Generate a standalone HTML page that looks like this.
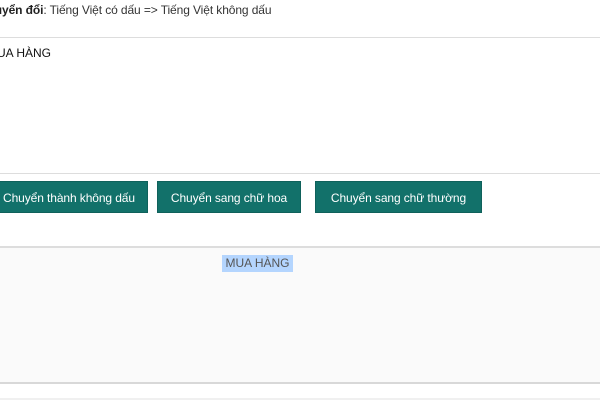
<!DOCTYPE html>
<html><head><meta charset="utf-8"><style>
body{margin:0;width:600px;height:400px;overflow:hidden;background:#fff;font-family:"Liberation Sans",sans-serif;color:#333;font-size:12px;position:relative}
.a{position:absolute}
.btn{position:absolute;top:181px;height:32px;background:#12716a;color:#fff;font-size:12px;letter-spacing:-0.1px;line-height:32px;text-align:center;border:1px solid #0f615b;box-sizing:border-box;white-space:nowrap}
</style></head><body>
<div class="a" style="left:-21px;top:3px;white-space:nowrap;letter-spacing:-0.1px"><b style="font-weight:600;color:#222">Chuyển đổi</b>: Tiếng Việt có dấu =&gt; Tiếng Việt không dấu</div>
<div class="a" style="left:0;top:37px;width:600px;height:1px;background:#ddd"></div>
<div class="a" style="left:-13px;top:46px;color:#111;white-space:nowrap">MUA HÀNG</div>
<div class="a" style="left:0;top:173px;width:600px;height:1px;background:#ddd"></div>
<div class="btn" style="left:-10px;width:158px">Chuyển thành không dấu</div>
<div class="btn" style="left:157px;width:144px">Chuyển sang chữ hoa</div>
<div class="btn" style="left:315px;width:167px">Chuyển sang chữ thường</div>
<div class="a" style="left:0;top:246px;width:600px;height:138px;background:#fafafa;border-top:2px solid #ddd;border-bottom:2px solid #d8d8d8;box-sizing:border-box"></div>
<div class="a" style="left:222px;top:255px;width:71px;height:17px;background:#b4d5fe;color:#555;line-height:17px;text-align:center">MUA HÀNG</div>
<div class="a" style="left:0;top:398px;width:600px;height:2px;background:#f0f0f0"></div>
</body></html>
